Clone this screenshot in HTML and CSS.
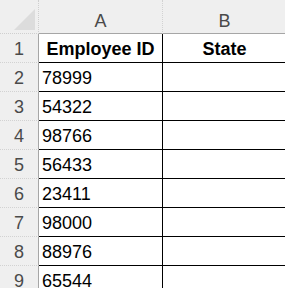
FILE: index.html
```html
<!DOCTYPE html>
<html lang="en">
<head>
  <meta charset="UTF-8">
  <meta name="viewport" content="width=device-width, initial-scale=1.0">
  <title>Employees</title>
  <link rel="stylesheet" href="styles.css">
</head>
<body>
  <div class="sheet">
    <div class="corner">
      <svg width="39" height="34" viewBox="0 0 39 34"><polygon points="14,30 35,9 35,30" fill="#dcdcdc"/></svg>
    </div>
    <div class="col-head">A</div>
    <div class="col-head">B</div>

    <div class="row-head">1</div>
    <div class="cell title">Employee ID</div>
    <div class="cell title">State</div>

    <div class="row-head">2</div>
    <div class="cell">78999</div>
    <div class="cell"></div>

    <div class="row-head">3</div>
    <div class="cell">54322</div>
    <div class="cell"></div>

    <div class="row-head">4</div>
    <div class="cell">98766</div>
    <div class="cell"></div>

    <div class="row-head">5</div>
    <div class="cell">56433</div>
    <div class="cell"></div>

    <div class="row-head">6</div>
    <div class="cell">23411</div>
    <div class="cell"></div>

    <div class="row-head">7</div>
    <div class="cell">98000</div>
    <div class="cell"></div>

    <div class="row-head">8</div>
    <div class="cell">88976</div>
    <div class="cell"></div>

    <div class="row-head">9</div>
    <div class="cell">65544</div>
    <div class="cell"></div>
  </div>
</body>
</html>
```
FILE: styles.css
```css
body {
  margin: 0;
  background: #fff;
  overflow: hidden;
  font-family: "Liberation Sans", Arial, sans-serif;
}
.sheet {
  display: grid;
  grid-template-columns: 39px 124px 124px;
  grid-template-rows: 34px;
  grid-auto-rows: 29px;
}
.sheet > div {
  box-sizing: border-box;
  font-size: 18px;
  line-height: 20px;
  white-space: nowrap;
  overflow: hidden;
}
.corner {
  background: #efefef;
  border-right: 1px dotted #cfcfcf;
  border-bottom: 1px dotted #cfcfcf;
}
.corner svg {
  display: block;
}
.col-head {
  background: #efefef;
  color: #4a4a4a;
  text-align: center;
  padding-top: 11px;
  border-right: 1px dotted #d2d2d2;
  border-bottom: 1px solid #a6a6a6;
}
.row-head {
  background: #efefef;
  color: #4a4a4a;
  text-align: center;
  padding-top: 5px;
  border-right: 1px solid #a6a6a6;
  border-bottom: 1px dotted #d2d2d2;
}
.cell {
  color: #000;
  padding: 5px 0 0 3px;
  border-right: 1px solid #000;
  border-bottom: 1px solid #000;
}
.title {
  font-weight: bold;
  text-align: center;
  padding-left: 0;
}
```
